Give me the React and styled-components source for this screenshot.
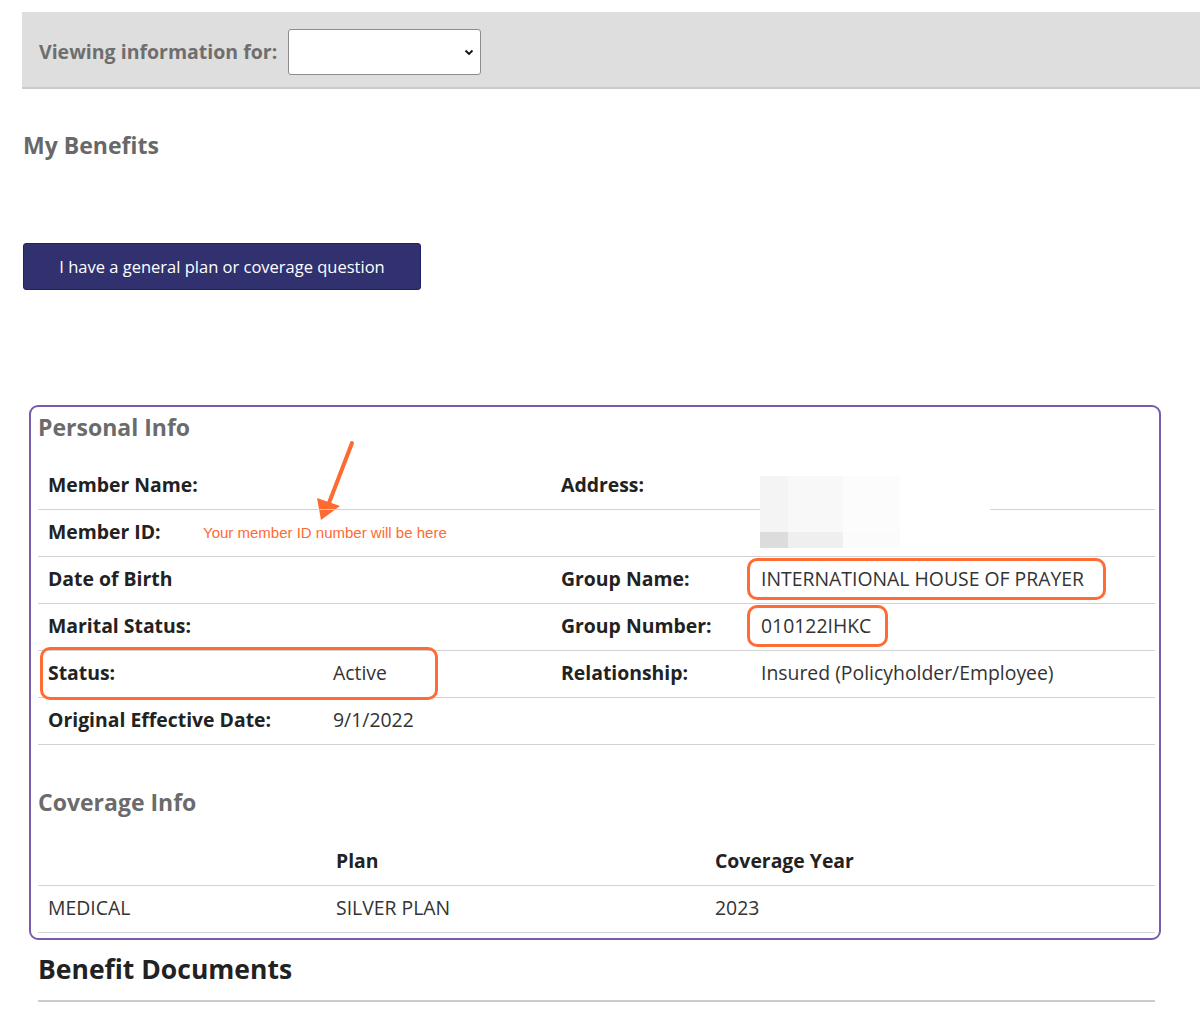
import React from "react";
import styled, { createGlobalStyle } from "styled-components";

const Global = createGlobalStyle`
  html, body { margin: 0; padding: 0; background: #fff; }
  body { font-family: "Open Sans", "Liberation Sans", Arial, sans-serif; color: #222; }
  * { box-sizing: border-box; }
`;

const Page = styled.div`
  padding: 12px 0 0 22px;
  width: 1200px;
  overflow: hidden;
`;

const HeaderBar = styled.div`
  height: 77px;
  background: #dedede;
  border-bottom: 2px solid #cacaca;
  display: flex;
  align-items: center;
  padding-left: 17px;
  gap: 11px;
`;

const HeaderLabel = styled.span`
  font-weight: 700;
  font-size: 19.5px;
  color: #6e6e6e;
  margin-top: 4px;
`;

const SelectBox = styled.div`
  width: 193px;
  height: 46px;
  background: #fff;
  border: 1px solid #8c8c8c;
  border-radius: 3px;
  display: flex;
  align-items: center;
  justify-content: flex-end;
  padding-right: 6px;
  margin-top: 5px;
`;

const PageTitle = styled.h2`
  margin: 41px 0 0 1px;
  font-size: 23px;
  line-height: 30px;
  font-weight: 700;
  color: #686868;
`;

const QuestionButton = styled.button`
  margin: 83px 0 0 1px;
  width: 398px;
  height: 47px;
  background: #31316f;
  border: 1px solid #20206a;
  border-radius: 3px;
  color: #fff;
  font-family: "Open Sans", sans-serif;
  font-size: 16.5px;
  font-weight: 500;
  display: block;
  cursor: pointer;
`;

const Card = styled.section`
  position: relative;
  margin: 115px 0 0 7px;
  width: 1132px;
  border: 2px solid #7a5ba9;
  border-radius: 9px;
  padding: 5px 4px 5px 7px;
`;

const SectionTitle = styled.h3`
  margin: ${(p) => p.$top || 0}px 0 0 0;
  font-size: 23px;
  line-height: 30px;
  font-weight: 700;
  color: #6b6b6b;
`;

const InfoTable = styled.div`
  margin-top: 21px;
`;

const InfoRow = styled.div`
  position: relative;
  display: grid;
  grid-template-columns: 285px 228px 200px 1fr;
  height: 47px;
  border-bottom: 1px solid #d2d2d2;
  align-items: center;
`;

const Label = styled.div`
  padding: 0 0 3px 10px;
  font-size: 19.4px;
  font-weight: 700;
  color: #222;
`;

const Value = styled.div`
  position: relative;
  padding: 0 0 3px 10px;
  font-size: 19.4px;
  color: #333;
`;

const Marked = styled.span`
  display: inline-block;
  border: 3px solid #ff6b35;
  border-radius: 10px;
  padding: 5px ${(p) => p.$right}px 6px 11px;
  margin-left: -14px;
  line-height: 25px;
`;

const StatusMark = styled.div`
  position: absolute;
  left: 2px;
  top: -4px;
  width: 398px;
  height: 53px;
  border: 3px solid #ff6b35;
  border-radius: 10px;
  pointer-events: none;
`;

const Redaction = styled.div`
  position: absolute;
  left: 9px;
  top: -9px;
  width: 230px;
  height: 72px;
  background: #fff;
  display: grid;
  grid-template-columns: 28px 55px 57px 1fr;
  grid-template-rows: 56px 16px;
`;

const Pixel = styled.div`
  background: ${(p) => p.$c};
`;

const Note = styled.div`
  position: absolute;
  left: 172px;
  top: 118px;
  font-family: "Liberation Sans", Arial, sans-serif;
  font-size: 15px;
  line-height: 16px;
  color: #ff6a33;
  white-space: nowrap;
`;

const ArrowSvg = styled.svg`
  position: absolute;
  left: 274px;
  top: 28px;
`;

const CoverageTable = styled.div`
  margin-top: 22px;
`;

const CoverageRow = styled.div`
  display: grid;
  grid-template-columns: 288px 379px 1fr;
  height: 47px;
  border-bottom: 1px solid #d2d2d2;
  align-items: center;
`;

const HeadCell = styled.div`
  padding: 0 0 3px 10px;
  font-size: 19.4px;
  font-weight: 700;
  color: #222;
`;

const BodyCell = styled.div`
  padding: 0 0 3px 10px;
  font-size: 19.4px;
  color: #333;
`;

const DocsSection = styled.section`
  margin: 11px 0 0 16px;
  width: 1117px;
`;

const DocsTitle = styled.h2`
  margin: 0;
  font-size: 26.5px;
  line-height: 36px;
  font-weight: 700;
  color: #222;
  padding-bottom: 13px;
  border-bottom: 2px solid #cccccc;
`;

const Chevron = () => (
  <svg width="10" height="8" viewBox="0 0 10 8">
    <path d="M1.5 2.5 L5 6 L8.5 2.5" fill="none" stroke="#111" strokeWidth="1.8" />
  </svg>
);

export default function App() {
  return (
    <>
      <Global />
      <Page>
        <HeaderBar>
          <HeaderLabel>Viewing information for:</HeaderLabel>
          <SelectBox>
            <Chevron />
          </SelectBox>
        </HeaderBar>

        <PageTitle>My Benefits</PageTitle>

        <QuestionButton>I have a general plan or coverage question</QuestionButton>

        <Card>
          <SectionTitle>Personal Info</SectionTitle>
          <ArrowSvg width="55" height="90" viewBox="0 0 55 90">
            <line x1="47" y1="8" x2="24" y2="68" stroke="#ff6a33" strokeWidth="4" strokeLinecap="round" />
            <polygon points="12,63 35,71 16,85" fill="#ff6a33" />
          </ArrowSvg>
          <Note>Your member ID number will be here</Note>

          <InfoTable>
            <InfoRow>
              <Label>Member Name:</Label>
              <Value />
              <Label>Address:</Label>
              <Value>
                <Redaction>
                  <Pixel $c="#f4f4f4" />
                  <Pixel $c="#f8f8f8" />
                  <Pixel $c="#fcfcfc" />
                  <Pixel $c="#fff" />
                  <Pixel $c="#dcdcdc" />
                  <Pixel $c="#efefef" />
                  <Pixel $c="#fbfbfb" />
                  <Pixel $c="#fff" />
                </Redaction>
              </Value>
            </InfoRow>
            <InfoRow>
              <Label>Member ID:</Label>
              <Value />
              <Label />
              <Value />
            </InfoRow>
            <InfoRow>
              <Label>Date of Birth</Label>
              <Value />
              <Label>Group Name:</Label>
              <Value>
                <Marked $right={19}>INTERNATIONAL HOUSE OF PRAYER</Marked>
              </Value>
            </InfoRow>
            <InfoRow>
              <Label>Marital Status:</Label>
              <Value />
              <Label>Group Number:</Label>
              <Value>
                <Marked $right={14}>010122IHKC</Marked>
              </Value>
            </InfoRow>
            <InfoRow>
              <StatusMark />
              <Label>Status:</Label>
              <Value>Active</Value>
              <Label>Relationship:</Label>
              <Value>Insured (Policyholder/Employee)</Value>
            </InfoRow>
            <InfoRow>
              <Label>Original Effective Date:</Label>
              <Value>9/1/2022</Value>
              <Label />
              <Value />
            </InfoRow>
          </InfoTable>

          <SectionTitle $top={42}>Coverage Info</SectionTitle>
          <CoverageTable>
            <CoverageRow>
              <HeadCell />
              <HeadCell>Plan</HeadCell>
              <HeadCell>Coverage Year</HeadCell>
            </CoverageRow>
            <CoverageRow>
              <BodyCell>MEDICAL</BodyCell>
              <BodyCell>SILVER PLAN</BodyCell>
              <BodyCell>2023</BodyCell>
            </CoverageRow>
          </CoverageTable>
        </Card>

        <DocsSection>
          <DocsTitle>Benefit Documents</DocsTitle>
        </DocsSection>
      </Page>
    </>
  );
}
